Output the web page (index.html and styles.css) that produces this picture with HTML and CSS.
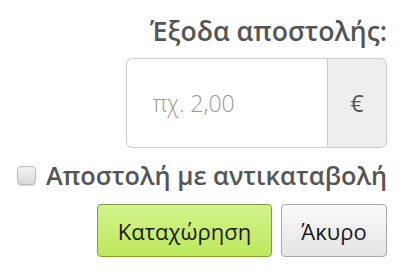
FILE: index.html
```html
<!DOCTYPE html>
<html lang="el">
<head>
<meta charset="utf-8">
<link rel="stylesheet" href="styles.css">
</head>
<body>
<div class="form">
  <div class="label">Έξοδα αποστολής:</div>
  <div class="group">
    <input class="field" type="text" placeholder="πχ. 2,00">
    <span class="addon">€</span>
  </div>
  <label class="check"><input type="checkbox" class="box"><span>Αποστολή με αντικαταβολή</span></label>
  <div class="actions">
    <button class="btn btn-ok">Καταχώρηση</button>
    <button class="btn btn-cancel">Άκυρο</button>
  </div>
</div>
</body>
</html>
```
FILE: styles.css
```css
html, body { margin: 0; padding: 0; background: #fff; }
body { width: 402px; height: 274px; overflow: hidden; font-family: "Open Sans", sans-serif; }
.form {
  display: flex;
  flex-direction: column;
  align-items: flex-end;
  padding: 14px 15px 0 0;
}
.label {
  font-weight: 600;
  font-size: 26.6px;
  color: #555;
  line-height: 34px;
}
.group {
  display: flex;
  margin-top: 10px;
  height: 90px;
  width: 261px;
}
.field {
  box-sizing: border-box;
  width: 201px;
  height: 90px;
  border: 1px solid #ccc;
  border-right: none;
  border-radius: 6px 0 0 6px;
  padding: 0 0 0 26px;
  font-family: "Open Sans", sans-serif;
  font-weight: 300;
  font-size: 23px;
  color: #555;
  outline: none;
}
.field::placeholder { color: #999; }
.addon {
  box-sizing: border-box;
  width: 60px;
  display: flex;
  align-items: center;
  justify-content: center;
  background: #eee;
  border: 1px solid #ccc;
  border-radius: 0 6px 6px 0;
  color: #555;
  font-family: "Open Sans", sans-serif;
  font-size: 23px;
}
.check {
  display: flex;
  align-items: center;
  gap: 10px;
  margin-top: 12px;
  font-weight: 600;
  font-size: 25.3px;
  color: #555;
  line-height: 30px;
}
.box {
  appearance: none;
  margin: 0;
  width: 19px;
  height: 19px;
  border: 1px solid #bbb;
  border-radius: 4px;
  background: linear-gradient(#f4f4f4, #d8d8d8);
  box-shadow: 0 1px 1px rgba(0,0,0,0.15);
}
.actions {
  display: flex;
  gap: 9px;
  margin-top: 14px;
}
.btn {
  box-sizing: border-box;
  height: 53px;
  border-radius: 4px;
  font-family: "Open Sans", sans-serif;
  font-size: 22px;
  color: #1a1a1a;
  padding: 0;
}
.btn-ok {
  width: 175px;
  background: linear-gradient(#d4f38d, #bde85c);
  border: 1px solid #7f9c36;
}
.btn-cancel {
  width: 106px;
  background: linear-gradient(#fafafa, #e4e4e4);
  border: 1px solid #a8a8a8;
}
```
